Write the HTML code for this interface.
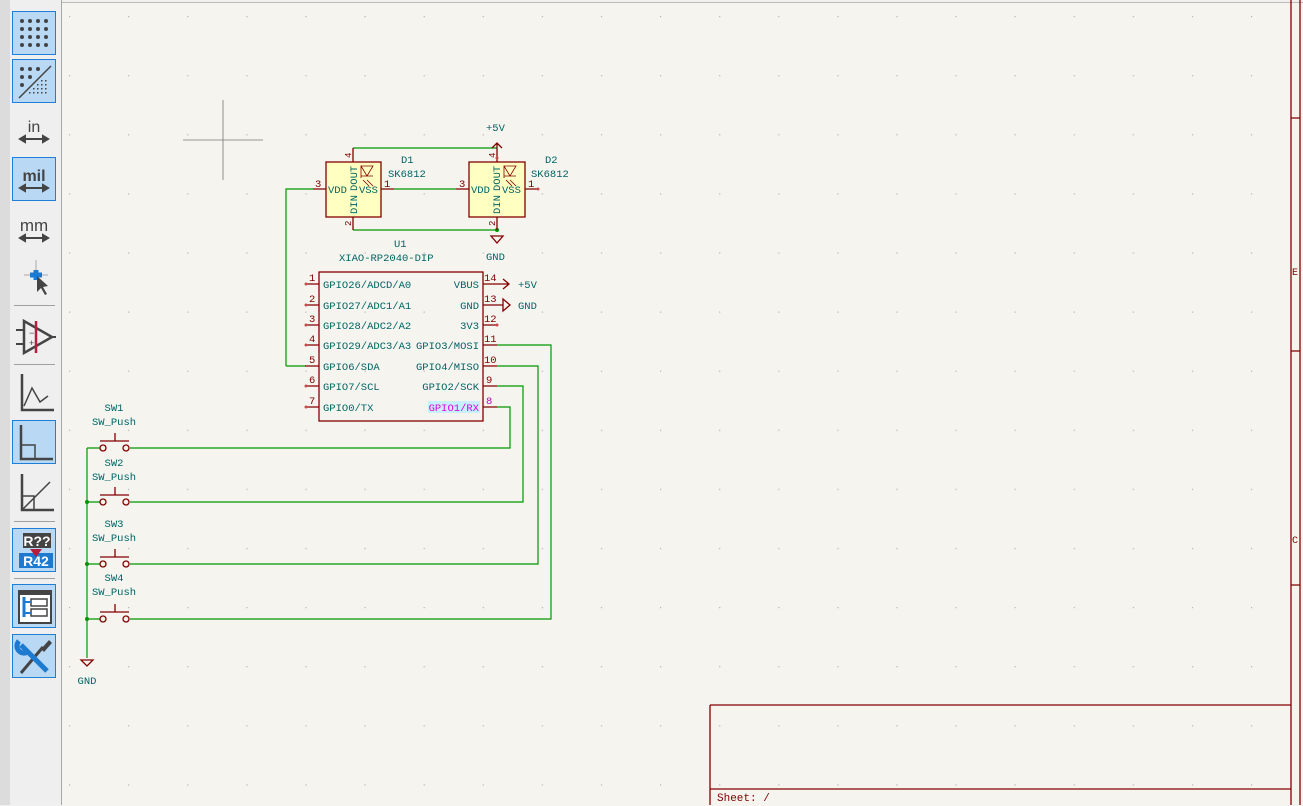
<!DOCTYPE html>
<html><head><meta charset="utf-8"><style>
html,body{margin:0;padding:0;width:1303px;height:805px;overflow:hidden;background:#f0f0f0;font-family:"Liberation Sans",sans-serif}
#lp{position:absolute;left:0;top:0;width:10px;height:805px;background:#dcdcdc;border-right:1px solid #aaa}
#tb{position:absolute;left:10px;top:0;width:51px;height:805px;background:#efefef;border-right:1px solid #a9a9a9}
.b{position:absolute;left:2px;width:44px;height:44px;box-sizing:border-box}
.on{background:#b8d8f4;border:1px solid #1f7fd6}
.sep{position:absolute;left:4px;width:41px;height:1px;background:#a0a0a0}
#cv{position:absolute;left:62px;top:2px;width:1241px;height:803px;background:#f5f4ef;border-top:1px solid #bbb}
</style></head><body>
<div id="lp"></div>
<div id="tb">
<div class="b on" style="top:11px"><svg width="42" height="42"><g fill="#444"><circle cx="9" cy="9" r="2"/><circle cx="17" cy="9" r="2"/><circle cx="25" cy="9" r="2"/><circle cx="33" cy="9" r="2"/><circle cx="9" cy="17" r="2"/><circle cx="17" cy="17" r="2"/><circle cx="25" cy="17" r="2"/><circle cx="33" cy="17" r="2"/><circle cx="9" cy="25" r="2"/><circle cx="17" cy="25" r="2"/><circle cx="25" cy="25" r="2"/><circle cx="33" cy="25" r="2"/><circle cx="9" cy="33" r="2"/><circle cx="17" cy="33" r="2"/><circle cx="25" cy="33" r="2"/><circle cx="33" cy="33" r="2"/></g></svg></div>
<div class="b on" style="top:59px"><svg width="42" height="42"><line x1="6" y1="38" x2="38" y2="6" stroke="#444" stroke-width="1.5"/><g fill="#444"><circle cx="9" cy="9" r="2"/><circle cx="17" cy="9" r="2"/><circle cx="25" cy="9" r="2"/><circle cx="9" cy="17" r="2"/><circle cx="17" cy="17" r="2"/><circle cx="9" cy="25" r="2"/></g><g fill="#444"><rect x="28" y="20" width="1.5" height="1.5"/><rect x="32" y="20" width="1.5" height="1.5"/><rect x="24" y="24" width="1.5" height="1.5"/><rect x="28" y="24" width="1.5" height="1.5"/><rect x="32" y="24" width="1.5" height="1.5"/><rect x="20" y="28" width="1.5" height="1.5"/><rect x="24" y="28" width="1.5" height="1.5"/><rect x="28" y="28" width="1.5" height="1.5"/><rect x="32" y="28" width="1.5" height="1.5"/><rect x="16" y="32" width="1.5" height="1.5"/><rect x="20" y="32" width="1.5" height="1.5"/><rect x="24" y="32" width="1.5" height="1.5"/><rect x="28" y="32" width="1.5" height="1.5"/><rect x="32" y="32" width="1.5" height="1.5"/></g></svg></div>
<div class="b" style="top:108px"><svg width="44" height="44"><text x="22" y="24" font-size="16" text-anchor="middle" fill="#444" font-family="Liberation Sans">in</text><path d="M8 31H36M8 31l5-3v6zM36 31l-5-3v6z" stroke="#444" stroke-width="2" fill="#444"/></svg></div>
<div class="b on" style="top:157px"><svg width="42" height="42"><text x="21" y="23" font-size="16" font-weight="bold" text-anchor="middle" fill="#444" font-family="Liberation Sans">mil</text><path d="M7 30H35M7 30l5-3v6zM35 30l-5-3v6z" stroke="#444" stroke-width="2" fill="#444"/></svg></div>
<div class="b" style="top:206px"><svg width="44" height="44"><text x="22" y="25" font-size="17" text-anchor="middle" fill="#444" font-family="Liberation Sans">mm</text><path d="M8 32H36M8 32l5-3v6zM36 32l-5-3v6z" stroke="#444" stroke-width="2" fill="#444"/></svg></div>
<div class="b" style="top:258px"><svg width="44" height="44"><path d="M24 2V22M12 17H36" stroke="#aaa"/><path d="M24 12V22M18 17H30" stroke="#1c7bd0" stroke-width="5"/><path d="M25 18L25 34 29 30 33 37 35 36 31 29 36 28Z" fill="#444"/></svg></div>
<div class="sep" style="top:305px"></div>
<div class="b" style="top:313px"><svg width="44" height="44"><path d="M12 8V40L40 24Z" fill="none" stroke="#444" stroke-width="2.5"/><path d="M4 17H12M4 31H12M40 24H46" stroke="#444" stroke-width="2"/><path d="M24 8V40" stroke="#b81c3c" stroke-width="2.5"/><text x="17" y="23" font-size="9" fill="#444">−</text><text x="17" y="33" font-size="9" fill="#444">+</text></svg></div>
<div class="sep" style="top:364px"></div>
<div class="b" style="top:370px"><svg width="44" height="44"><path d="M10 4V40H42" stroke="#444" stroke-width="2.5" fill="none"/><path d="M12 36L20 18 28 32 36 26" stroke="#444" stroke-width="1.5" fill="none"/></svg></div>
<div class="b on" style="top:420px"><svg width="42" height="42"><path d="M8 4V38H40" stroke="#444" stroke-width="2.5" fill="none"/><path d="M8 24H22V38" stroke="#444" stroke-width="1.5" fill="none"/></svg></div>
<div class="b" style="top:470px"><svg width="44" height="44"><path d="M10 4V40H42" stroke="#444" stroke-width="2.5" fill="none"/><path d="M10 40L38 12M10 26H22V40" stroke="#444" stroke-width="1.5" fill="none"/></svg></div>
<div class="sep" style="top:521px"></div>
<div class="b on" style="top:528px"><svg width="42" height="42"><rect x="10" y="4" width="28" height="15" fill="#444"/><text x="24" y="17" font-size="14" font-weight="bold" fill="#fff" text-anchor="middle">R??</text><rect x="6" y="24" width="34" height="15" fill="#1c7bd0"/><text x="23" y="37" font-size="14" font-weight="bold" fill="#fff" text-anchor="middle">R42</text><path d="M17 20H29L23 28Z" fill="#b81c3c"/></svg></div>
<div class="sep" style="top:578px"></div>
<div class="b on" style="top:584px"><svg width="42" height="42"><rect x="6" y="6" width="32" height="32" fill="#fff" stroke="#444" stroke-width="2"/><rect x="6" y="6" width="32" height="4" fill="#444"/><path d="M11 12V32" stroke="#1c7bd0" stroke-width="3"/><rect x="18" y="14" width="16" height="7" fill="none" stroke="#444" stroke-width="1.5"/><rect x="18" y="24" width="16" height="7" fill="none" stroke="#444" stroke-width="1.5"/><path d="M11 17H18M11 28H18" stroke="#1c7bd0" stroke-width="2"/></svg></div>
<div class="b on" style="top:634px"><svg width="42" height="42"><path d="M8 38L30 12" stroke="#444" stroke-width="3"/><path d="M28 14L36 5 39 8 31 17Z" fill="#444"/><path d="M8 10L34 36" stroke="#1c7bd0" stroke-width="5"/><path d="M6 6A7 7 0 1 0 16 16" stroke="#1c7bd0" stroke-width="5" fill="none"/></svg></div>
</div>
<div id="cv"></div>
<svg width="1303" height="805" style="position:absolute;left:0;top:0" font-family="Liberation Mono,monospace" font-size="10.5">
<defs><pattern id="g" x="69" y="16" width="59.1" height="59.1" patternUnits="userSpaceOnUse"><rect width="1.2" height="1.2" fill="#b4b4b4"/></pattern></defs>
<rect x="64" y="4" width="1227" height="801" fill="url(#g)"/>
<path d="M183 140H263M223 100V180" stroke="#777" stroke-width="0.8"/>
<g stroke="#840000" stroke-width="1.3" fill="none">
<path d="M1291 0V805M1300 0V805M1291 118H1300M1291 351H1300M1291 585H1300"/>
<path d="M710 705H1291M710 705V805M710 789H1291"/>
</g>
<g fill="#840000" font-size="10"><text x="1292" y="275">E</text><text x="1292" y="543">C</text><text x="717" y="801" font-size="11">Sheet: /</text></g>
<g stroke="#009600" stroke-width="1.2" fill="none">
<path d="M353 148H497M353 230H497M286 366V189H313M394 189H456"/>
<path d="M286 366H306M497 345H551V619H130M497 366H538V564H130M497 386H523V502H130M497 407H510V448H130"/>
<path d="M87 448V658M87 448H100M87 502H100M87 564H100M87 619H100"/>
</g>
<g fill="#009600"><circle cx="87" cy="502" r="2"/><circle cx="87" cy="564" r="2"/><circle cx="87" cy="619" r="2"/><circle cx="497" cy="230" r="2"/></g>
<g fill="#ffffc2" stroke="#840000" stroke-width="1.3"><rect x="326" y="162" width="55" height="55"/><rect x="469" y="162" width="56" height="55"/></g>
<rect x="319" y="272" width="164" height="149" fill="none" stroke="#840000" stroke-width="1.3"/>
<g stroke="#840000" stroke-width="1.3" fill="none">
<path d="M353 148V162M353 217V230M313 189H326M381 189H394M456 189H469M497 148V162M497 217V230M525 189H538"/>
<path d="M492 148L497 143 502 148M497 143V148M491 236H503L497 243Z"/>
<path d="M305 284H319M305 305H319M305 325H319M305 345H319M305 366H319M305 386H319M305 407H319M483 284H497M483 305H497M483 325H497M483 345H497M483 366H497M483 386H497M483 407H497"/>
<path d="M497 284H509M503 279L509 284 503 289M497 305H503M503 299V311L510 305Z"/>
<circle cx="103" cy="448" r="3"/><circle cx="126" cy="448" r="3"/><path d="M100 441H129M115 433V441"/>
<circle cx="103" cy="502" r="3"/><circle cx="126" cy="502" r="3"/><path d="M100 495H129M115 487V495"/>
<circle cx="103" cy="564" r="3"/><circle cx="126" cy="564" r="3"/><path d="M100 557H129M115 549V557"/>
<circle cx="103" cy="619" r="3"/><circle cx="126" cy="619" r="3"/><path d="M100 612H129M115 604V612"/>
<path d="M81 660H93L87 666Z"/>
<path d="M361 166L361 178M361 166H373L367 176ZM361 176H373M363 180L369 186M367 180L373 186" stroke-width="0.8"/>
<path d="M504 166L504 178M504 166H516L510 176ZM504 176H516M506 180L512 186M510 180L516 186" stroke-width="0.8"/>
</g>
<g fill="#c84b4b"><circle cx="306" cy="284" r="1.5"/><circle cx="306" cy="305" r="1.5"/><circle cx="306" cy="325" r="1.5"/><circle cx="306" cy="345" r="1.5"/><circle cx="306" cy="386" r="1.5"/><circle cx="306" cy="407" r="1.5"/><circle cx="497" cy="325" r="1.5"/><circle cx="538" cy="189" r="1.5"/><circle cx="497" cy="158" r="1.5"/></g>
<g fill="#840000">
<text x="315" y="187">3</text><text x="384" y="187">1</text><text x="459" y="187">3</text><text x="528" y="187">1</text>
<text x="309" y="281">1</text><text x="309" y="302">2</text><text x="309" y="322">3</text><text x="309" y="342">4</text><text x="309" y="363">5</text><text x="309" y="383">6</text><text x="309" y="404">7</text>
<text x="484" y="281">14</text><text x="484" y="302">13</text><text x="484" y="322">12</text><text x="484" y="342">11</text><text x="484" y="363">10</text><text x="486" y="383">9</text>
<text transform="translate(351,158) rotate(-90)" font-size="9">4</text><text transform="translate(351,226) rotate(-90)" font-size="9">2</text>
<text transform="translate(495,158) rotate(-90)" font-size="9">4</text><text transform="translate(495,226) rotate(-90)" font-size="9">2</text>
</g>
<text x="486" y="404" fill="#c000c0">8</text>
<g fill="#006464">
<text x="328" y="193">VDD</text><text x="359" y="193">VSS</text><text x="471" y="193">VDD</text><text x="502" y="193">VSS</text>
<text transform="translate(357,191) rotate(-90)">DOUT</text><text transform="translate(357,214) rotate(-90)">DIN</text>
<text transform="translate(500,191) rotate(-90)">DOUT</text><text transform="translate(500,214) rotate(-90)">DIN</text>
<text x="401" y="163">D1</text><text x="388" y="177">SK6812</text><text x="545" y="163">D2</text><text x="531" y="177">SK6812</text>
<text x="486" y="131">+5V</text><text x="486" y="260">GND</text>
<text x="394" y="247">U1</text><text x="339" y="261">XIAO-RP2040-DIP</text>
<text x="323" y="288">GPIO26/ADCD/A0</text><text x="323" y="309">GPIO27/ADC1/A1</text><text x="323" y="329">GPIO28/ADC2/A2</text><text x="323" y="349">GPIO29/ADC3/A3</text><text x="323" y="370">GPIO6/SDA</text><text x="323" y="390">GPIO7/SCL</text><text x="323" y="411">GPIO0/TX</text>
<g text-anchor="end"><text x="479" y="288">VBUS</text><text x="479" y="309">GND</text><text x="479" y="329">3V3</text><text x="479" y="349">GPIO3/MOSI</text><text x="479" y="370">GPIO4/MISO</text><text x="479" y="390">GPIO2/SCK</text></g>
<text x="518" y="288">+5V</text><text x="518" y="309">GND</text>
<g text-anchor="middle"><text x="114" y="411">SW1</text><text x="114" y="425">SW_Push</text><text x="114" y="466">SW2</text><text x="114" y="480">SW_Push</text><text x="114" y="527">SW3</text><text x="114" y="541">SW_Push</text><text x="114" y="581">SW4</text><text x="114" y="595">SW_Push</text><text x="87" y="684">GND</text></g>
</g>
<rect x="428" y="401" width="52" height="12" fill="#c8f0ff"/>
<text x="479" y="411" text-anchor="end" fill="#e000e0">GPIO1/RX</text>
</svg>
</body></html>
